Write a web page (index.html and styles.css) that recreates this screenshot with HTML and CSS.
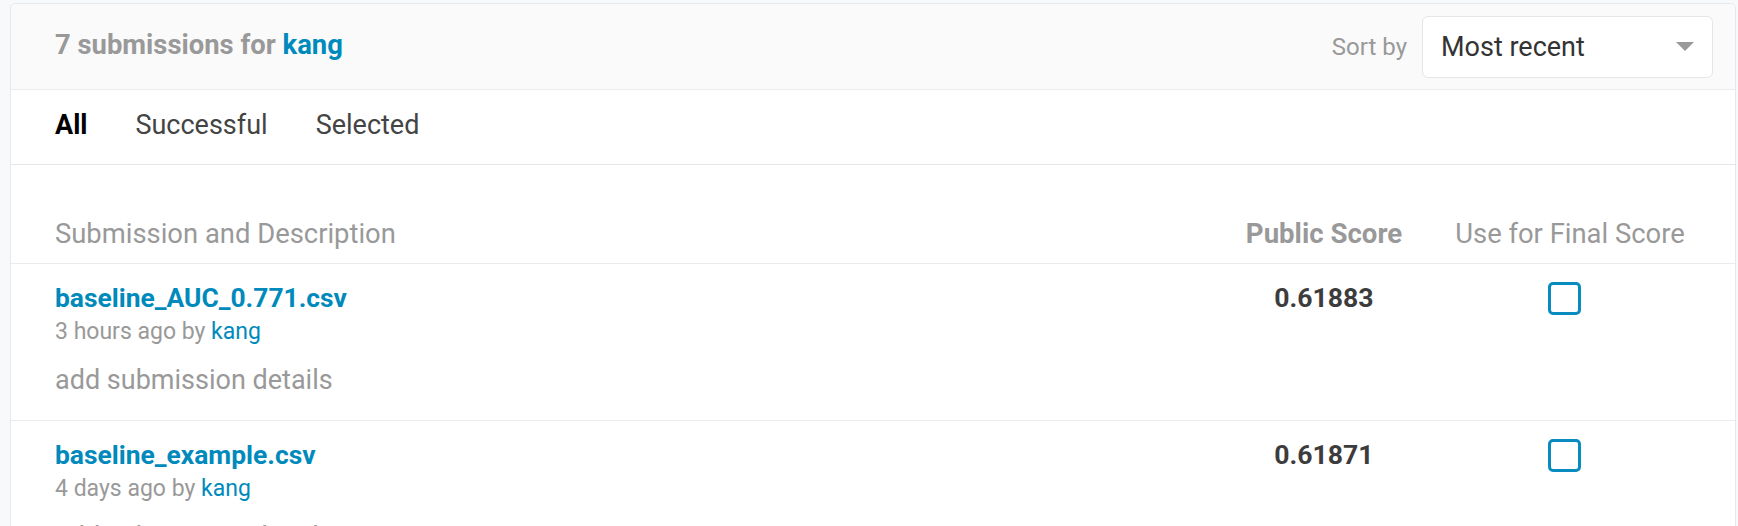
FILE: index.html
```html
<!DOCTYPE html>
<html lang="en">
<head>
<meta charset="utf-8">
<title>Submissions</title>
<link rel="stylesheet" href="styles.css">
</head>
<body>
<div class="panel">
  <div class="panel-header">
    <div class="title">7 submissions for <a class="user" href="#">kang</a></div>
    <div class="sort">
      <span class="sort-label">Sort by</span>
      <div class="select">
        <span class="select-value">Most recent</span>
        <span class="select-arrow"></span>
      </div>
    </div>
  </div>
  <div class="tabs">
    <span class="tab tab-active">All</span>
    <span class="tab">Successful</span>
    <span class="tab">Selected</span>
  </div>
  <div class="table">
    <div class="row row-head">
      <div class="col-desc">Submission and Description</div>
      <div class="col-score head-score">Public Score</div>
      <div class="col-final">Use for Final Score</div>
    </div>
    <div class="row">
      <div class="col-desc">
        <a class="file" href="#">baseline_AUC_0.771.csv</a>
        <div class="meta">3 hours ago by <a class="user-small" href="#">kang</a></div>
        <div class="details">add submission details</div>
      </div>
      <div class="col-score score">0.61883</div>
      <div class="col-final"><span class="checkbox"></span></div>
    </div>
    <div class="row">
      <div class="col-desc">
        <a class="file" href="#">baseline_example.csv</a>
        <div class="meta">4 days ago by <a class="user-small" href="#">kang</a></div>
        <div class="details">add submission details</div>
      </div>
      <div class="col-score score">0.61871</div>
      <div class="col-final"><span class="checkbox"></span></div>
    </div>
  </div>
</div>
</body>
</html>
```
FILE: styles.css
```css
html, body {
  margin: 0;
  padding: 0;
}
body {
  background: #f7f9fa;
  font-family: Roboto, "Liberation Sans", Arial, sans-serif;
  height: 526px;
  overflow: hidden;
}
a {
  text-decoration: none;
}
.panel {
  margin: 3px 0 0 10px;
  width: 1726px;
  background: #ffffff;
  border: 1px solid #e6e8ea;
  border-radius: 5px;
  box-sizing: border-box;
  min-height: 560px;
}
.panel-header {
  height: 86px;
  box-sizing: border-box;
  background: #fafafa;
  border-bottom: 1px solid #ebebeb;
  border-radius: 5px 5px 0 0;
  display: flex;
  align-items: center;
  justify-content: space-between;
  padding: 0 22px 0 44px;
}
.title {
  font-size: 27.4px;
  font-weight: 700;
  color: #999999;
  margin-bottom: 4px;
}
.user {
  color: #008abc;
}
.sort {
  display: flex;
  align-items: center;
  gap: 15px;
}
.sort-label {
  font-size: 24px;
  color: #999999;
}
.select {
  width: 291px;
  height: 62px;
  box-sizing: border-box;
  background: #ffffff;
  border: 1px solid #e6e6e6;
  border-radius: 6px;
  display: flex;
  align-items: center;
  justify-content: space-between;
  padding: 0 18px 0 18px;
}
.select-value {
  font-size: 27px;
  color: #333333;
}
.select-arrow {
  width: 0;
  height: 0;
  border-left: 9px solid transparent;
  border-right: 9px solid transparent;
  border-top: 9px solid #999999;
}
.tabs {
  height: 75px;
  box-sizing: border-box;
  border-bottom: 1px solid #e6e6e6;
  display: flex;
  align-items: center;
  padding: 0 0 4px 44px;
  gap: 48px;
}
.tab {
  font-size: 27px;
  color: #444444;
}
.tab-active {
  font-weight: 700;
  color: #000000;
}
.table {
  padding-top: 53px;
}
.row {
  display: grid;
  grid-template-columns: 1fr 232px 260px;
  padding: 18px 35px 22px 44px;
  border-bottom: 1px solid #ebebeb;
}
.row-head {
  padding-top: 0;
  padding-bottom: 13px;
  font-size: 27.4px;
  line-height: 32px;
  color: #999999;
}
.col-score,
.col-final {
  text-align: center;
}
.head-score {
  font-weight: 700;
  font-size: 27.6px;
}
.file {
  display: block;
  font-size: 26.4px;
  font-weight: 700;
  line-height: 32px;
  color: #008abc;
}
.meta {
  margin-top: 2px;
  font-size: 23px;
  line-height: 32px;
  color: #999999;
}
.user-small {
  color: #008abc;
}
.details {
  margin-top: 14px;
  font-size: 27px;
  line-height: 36px;
  color: #999999;
}
.score {
  font-size: 26.6px;
  font-weight: 700;
  line-height: 32px;
  color: #3c3c3c;
}
.col-final {
  padding-top: 0;
}
.checkbox {
  display: inline-block;
  width: 33px;
  height: 33px;
  box-sizing: border-box;
  border: 3px solid #0a8bc0;
  border-radius: 5px;
  margin-left: -12px;
}
```
